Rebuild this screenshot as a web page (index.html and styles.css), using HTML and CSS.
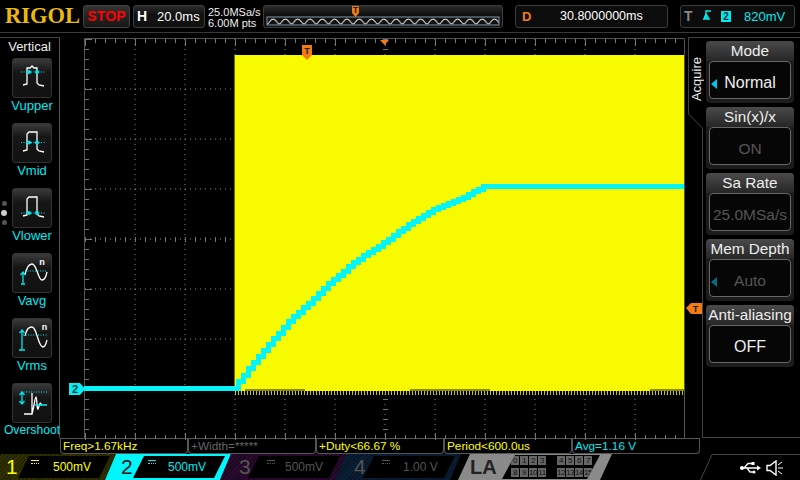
FILE: index.html
```html
<!DOCTYPE html>
<html lang="en">

<head>
    <meta charset="UTF-8">
    <meta name="viewport" content="width=device-width, initial-scale=1.0">
    <title>Scope</title>
    <link rel="stylesheet" href="styles.css">
</head>

<body>

    <div class="top">
        <div class="logo">RIGOL</div>
        <div class="stop">STOP</div>
        <div class="box hbox"><b>H</b><span>20.0ms</span></div>
        <div class="rate"><p>25.0MSa/s</p><p>6.00M pts</p></div>
        <div class="box overview">
            <svg width="240" height="22" viewBox="0 0 240 22">
                <defs>
                    <pattern id="sine" x="4" y="12" width="12.3" height="10" patternUnits="userSpaceOnUse">
                        <path d="M0 7C2 7 3 2 6.15 2S10 7 12.3 7" fill="none" stroke="#eee" stroke-width="1"></path>
                    </pattern>
                </defs>
                <rect x="4" y="12" width="232" height="8" fill="url(#sine)" stroke="#8496a8"></rect>
                <path d="M89 1h7v7l-3.500 4l-3.500 -4z" fill="#f47a14"></path>
                <text x="92.500" y="8" class="tmark">T</text>
            </svg>
        </div>
        <div class="box dbox"><b>D</b><span>30.8000000ms</span></div>
        <div class="box tbox">
            <b>T</b>
            <svg width="12" height="16" viewBox="0 0 12 16"><path d="M1 11H4V3H9M2 11H7L4 6z" fill="none" stroke="#00e8f0" stroke-width="1.500"></path></svg>
            <i>2</i>
            <span>820mV</span>
        </div>
    </div>

    <div class="main">
        <div class="vert">
            <div class="vtitle">Vertical</div>
            <div class="pager"><i></i><i class="on"></i><i></i></div>

            <div class="vitem">
                <div class="vbtn">
                    <svg width="40" height="40" viewBox="0 0 40 40">
                        <path class="wave" d="M11 27L15 26V10H18L20 8L22 10H25V25L27 27L32 28"></path>
                        <path class="dots" d="M9 14H34"></path>
                        <circle class="dot" cx="17" cy="14" r="2"></circle>
                        <circle class="dot" cx="25" cy="14" r="2"></circle>
                    </svg>
                </div>
                <p>Vupper</p>
            </div>
            <div class="vitem">
                <div class="vbtn">
                    <svg width="40" height="40" viewBox="0 0 40 40">
                        <path class="wave" d="M11 28L15 27V11L17 9H25V26L27 28L32 29"></path>
                        <path class="dots" d="M9 19.500H34"></path>
                        <circle class="dot" cx="17" cy="19.500" r="2"></circle>
                        <circle class="dot" cx="25" cy="19.500" r="2"></circle>
                    </svg>
                </div>
                <p>Vmid</p>
            </div>
            <div class="vitem">
                <div class="vbtn">
                    <svg width="40" height="40" viewBox="0 0 40 40">
                        <path class="wave" d="M11 28L15 27V11L17 9H25V26L27 28L32 29"></path>
                        <path class="dots" d="M9 25H34"></path>
                        <circle class="dot" cx="17" cy="25" r="2"></circle>
                        <circle class="dot" cx="25" cy="25" r="2"></circle>
                    </svg>
                </div>
                <p>Vlower</p>
            </div>
            <div class="vitem">
                <div class="vbtn">
                    <svg width="40" height="40" viewBox="0 0 40 40">
                        <path class="wave" d="M13 22C15 12 18 11 20 11C25 11 26 27 30 27C33 27 34 24 35 19"></path>
                        <path class="dots" d="M13 18H35"></path>
                        <path class="arrow" d="M9 31H13M11 31V20M8.500 22L11 19L13.500 22"></path>
                        <text x="30" y="12" class="nmark">n</text>
                    </svg>
                </div>
                <p>Vavg</p>
            </div>
            <div class="vitem">
                <div class="vbtn">
                    <svg width="40" height="40" viewBox="0 0 40 40">
                        <path class="wave" d="M13 18C15 10 17 9 20 9C25 9 26 29 31 29C33 29 34 26 35 22"></path>
                        <path class="dots" d="M11 17H35"></path>
                        <path class="arrow" d="M7 32H13M10 32V13M7.500 15L10 12L12.500 15"></path>
                        <text x="32.500" y="12" class="nmark">n</text>
                    </svg>
                </div>
                <p>Vrms</p>
            </div>
            <div class="vitem">
                <div class="vbtn">
                    <svg width="40" height="40" viewBox="0 0 40 40">
                        <path class="wave" d="M12 31H20V10M20 31C22 24 23 14 24 14S25 28 26 26S28 18 29 21L30 22"></path>
                        <path class="dots" d="M9 9H35"></path>
                        <path class="arrow" d="M10 9V21M7.500 12L10 9L12.500 12M7.500 18L10 21L12.500 18M23 22H35"></path>
                    </svg>
                </div>
                <p class="small">Overshoot</p>
            </div>
        </div>

        <svg class="scope" width="628" height="406" viewBox="60 32 628 406">
            <path class="frame" d="M84.500 438V37.500H684.500V438"></path>
            <!-- grid -->
            <path class="grid" d="M135 38V438M185 38V438M235 38V438M285 38V438M335 38V438M385 38V438M435 38V438M485 38V438M535 38V438M585 38V438M635 38V438"></path>
            <path class="grid" d="M85 88H685M85 138H685M85 188H685M85 238H685M85 288H685M85 338H685M85 388H685"></path>
            <!-- ticks on the frame -->
            <line class="tick" x1="85" y1="40" x2="685" y2="40" stroke-width="4" stroke-dasharray="1 9"></line>
            <line class="tick" x1="85" y1="41" x2="685" y2="41" stroke-width="7" stroke-dasharray="1 49"></line>
            <line class="tick" x1="85" y1="436" x2="685" y2="436" stroke-width="4" stroke-dasharray="1 9"></line>
            <line class="tick" x1="85" y1="435" x2="685" y2="435" stroke-width="7" stroke-dasharray="1 49"></line>
            <line class="tick" x1="87" y1="38" x2="87" y2="438" stroke-width="4" stroke-dasharray="1 9"></line>
            <line class="tick" x1="88" y1="38" x2="88" y2="438" stroke-width="7" stroke-dasharray="1 49"></line>
            <line class="tick" x1="85" y1="238" x2="685" y2="238" stroke-width="5" stroke-dasharray="1 9"></line>
            <line class="tick" x1="385" y1="38" x2="385" y2="438" stroke-width="5" stroke-dasharray="1 9"></line>

            <!-- channel 1 -->
            <rect x="235" y="54" width="449" height="336" fill="#f8fb00"></rect>
            <path d="M234.500 54V390" stroke="#6f7000" fill="none"></path>
            <path d="M245 389H305M410 389H490M650 389H684" stroke="#8b8c00" stroke-width="2" fill="none"></path>
            <line x1="235" y1="392" x2="684" y2="392" stroke="#c8ca00" stroke-width="4" stroke-dasharray="1 2"></line>

            <!-- channel 2 -->
            <path class="trace" d="M84 387H238V380H243V374H248V367H253V361H258V355H263V349H268V343H273V337H278V332H283V326H288V320H293V315H298V311H303V306H308V302H313V297H318V292H323V287H328V282H333V278H338V274H343V270H348V265H353V261H358V258H363V254H368V251H373V248H378V245H383V241H388V238H393V234H398V230H403V227H408V223H413V220H418V217H423V214H428V211H433V208H438V206H443V204H448V202H453V200H458V198H463V196H468V193H473V190H478V188H483V185H684"></path>

            <!-- markers -->
            <path d="M380 39H389L384.500 44z" fill="#f47a14"></path>
            <path d="M302 44H312V54L307 59L302 54z" fill="#f47a14"></path>
            <text x="307" y="53" class="tmark">T</text>
            <path d="M69 382H80L85 388L80 394H69z" fill="#00f0f8"></path>
            <text x="75" y="392" class="cmark">2</text>
            <path d="M686 307L691 302H702V313H691z" fill="#f47a14"></path>
            <text x="695.500" y="311" class="tmark">T</text>
        </svg>

        <div class="menu">
            <svg class="outline" width="112" height="406" viewBox="0 0 112 406">
                <path d="M112 5.500H0.500V82L14.500 96V405.500H112" fill="none" stroke="#444"></path>
            </svg>
            <div class="tab"><span>Acquire</span></div>
            <div class="items">
                <div class="item">
                    <div class="ititle">Mode</div>
                    <div class="ival"><i></i>Normal</div>
                </div>
                <div class="item">
                    <div class="ititle">Sin(x)/x</div>
                    <div class="ival off">ON</div>
                </div>
                <div class="item">
                    <div class="ititle">Sa Rate</div>
                    <div class="ival off">25.0MSa/s</div>
                </div>
                <div class="item">
                    <div class="ititle">Mem Depth</div>
                    <div class="ival off"><i class="dim"></i>Auto</div>
                </div>
                <div class="item">
                    <div class="ititle">Anti-aliasing</div>
                    <div class="ival">OFF</div>
                </div>
            </div>
        </div>
    </div>

    <div class="meas">
        <div class="m yel">Freq&gt;1.67kHz</div>
        <div class="m gry">+Width=*****</div>
        <div class="m yel">+Duty&lt;66.67 %</div>
        <div class="m yel">Period&lt;600.0us</div>
        <div class="m cya">Avg=1.16 V</div>
    </div>

    <div class="bottom">
        <div class="ch ch1"><b>1</b><div class="val"><u></u>500mV</div></div>
        <div class="ch ch2"><b>2</b><div class="val"><u></u>500mV</div></div>
        <div class="ch ch3"><b>3</b><div class="val"><u></u>500mV</div></div>
        <div class="ch ch4"><b>4</b><div class="val"><u></u>1.00 V</div></div>
        <div class="la">
            <b>LA</b>
            <div class="bits">
                <div class="row"><span>0</span><span>1</span><span>2</span><span>3</span><em></em><span>4</span><span>5</span><span>6</span><span>7</span></div>
                <div class="row"><span>8</span><span>9</span><span>10</span><span>11</span><em></em><span>12</span><span>13</span><span>14</span><span>15</span></div>
            </div>
        </div>
        <svg class="slash" width="13" height="26" viewBox="0 0 13 26"><path d="M0.500 26L12 0.500H13" fill="none" stroke="#444"></path></svg>
        <div class="status">
            <svg width="21" height="12" viewBox="0 0 21 12">
                <path d="M0 6H18M4 6L8 1.500H12M7 6L10 10H13" fill="none" stroke="#fff" stroke-width="1.300"></path>
                <path d="M17 3.500L21 6L17 8.500z" fill="#fff"></path>
                <circle cx="2" cy="6" r="2" fill="#fff"></circle>
                <rect x="11.500" y="0" width="3" height="3" fill="#fff"></rect>
                <circle cx="14" cy="10" r="1.500" fill="#fff"></circle>
            </svg>
            <svg width="18" height="16" viewBox="0 0 18 16">
                <path d="M1 5.500H4L10 1V15L4 10.500H1z" fill="none" stroke="#fff" stroke-width="1.400"></path>
                <path d="M12 5L16 2M12 8H17M12 11L16 14" fill="none" stroke="#fff"></path>
            </svg>
        </div>
    </div>

</body>

</html>
```

FILE: styles.css
```css
* {
    margin: 0;
    padding: 0;
    box-sizing: border-box;
}

html,
body {
    width: 800px;
    height: 480px;
    overflow: hidden;
    background-color: #000;
    color: #fff;
    font-family: "Liberation Sans", Arial, sans-serif;
}

/* top bar */
.top {
    height: 33px;
    display: flex;
    align-items: center;
    border-bottom: 1px solid #3a3a3a;
    position: relative;
}

.logo {
    width: 83px;
    padding-left: 5px;
    font-family: "Liberation Serif", serif;
    font-weight: 700;
    font-size: 22.500px;
    color: #ecb90f;
}

.stop {
    width: 47px;
    height: 23px;
    margin-right: 3px;
    line-height: 21px;
    text-align: center;
    font-size: 14px;
    font-weight: 700;
    letter-spacing: .2px;
    color: #ff0000;
    background-image: linear-gradient(#333, #161616);
    border: 1px solid #444;
    border-radius: 3px;
}

.box {
    height: 23px;
    display: flex;
    align-items: center;
    background-image: linear-gradient(#2c2c2c, #111 40%);
    border: 1px solid #3c3c3c;
    border-radius: 3px;
}

.hbox {
    width: 72px;
    padding-left: 3px;
    font-size: 13px;
}

.hbox b {
    width: 20px;
    font-size: 14px;
}

.rate {
    width: 55px;
    margin-left: 3px;
    padding-top: 3px;
    font-size: 11px;
    line-height: 11px;
    color: #eee;
}

.overview {
    width: 240px;
}

.overview svg {
    margin-left: -1px;
    flex: none;
}

.tmark {
    font-size: 9px;
    font-weight: 700;
    text-anchor: middle;
    fill: #222;
}

.cmark {
    font-size: 11px;
    font-weight: 700;
    text-anchor: middle;
    fill: #033;
}

.dbox {
    width: 153px;
    margin-left: 12px;
    font-size: 12.500px;
    background-image: none;
    background-color: #0c0c0c;
}

.dbox b {
    width: 44px;
    padding-left: 6px;
    font-size: 13px;
    color: #f47a14;
}

.tbox {
    width: 115px;
    margin-left: 12px;
    padding-left: 3px;
    font-size: 13px;
    background-image: none;
    background-color: #0c0c0c;
}

.tbox b {
    width: 18px;
    font-size: 14px;
    color: #888;
}

.tbox i {
    width: 10px;
    height: 11px;
    margin-left: 7px;
    line-height: 11px;
    text-align: center;
    font-style: normal;
    font-weight: 700;
    font-size: 10px;
    color: #033;
    background-color: #00e8f0;
}

.tbox span {
    margin-left: 13px;
    color: #00e8f0;
}

/* middle */
.main {
    height: 405px;
    display: flex;
}

.vert {
    position: relative;
    width: 60px;
    margin-top: 4px;
    border-top: 1px solid #444;
    border-right: 1px solid #555;
}

.vtitle {
    height: 20px;
    line-height: 17px;
    text-align: center;
    font-size: 13px;
    color: #eee;
}

.pager {
    position: absolute;
    left: 1px;
    top: 163px;
    display: flex;
    flex-direction: column;
    align-items: center;
    gap: 4px;
}

.pager i {
    width: 5px;
    height: 5px;
    border-radius: 50%;
    background-color: #555;
}

.pager i.on {
    width: 6px;
    height: 6px;
    background-color: #ccc;
}

.vitem {
    height: 65px;
    margin-left: 12px;
    width: 48px;
}

.vitem p {
    width: 40px;
    display: flex;
    justify-content: center;
    white-space: nowrap;
    height: 25px;
    line-height: 15px;
    font-size: 13px;
    color: #00e8f0;
}

.vitem p.small {
    font-size: 12.200px;
}

.vbtn {
    width: 40px;
    height: 40px;
    background-image: linear-gradient(#3a3a3a, #161616 35%, #111);
    border: 1px solid #333;
    border-radius: 3px;
    overflow: hidden;
}

.vbtn svg {
    display: block;
    margin: -1px;
}

.wave {
    fill: none;
    stroke: #fff;
    stroke-width: 1.300;
}

.dots {
    fill: none;
    stroke: #00e8f0;
    stroke-width: 1;
    stroke-dasharray: 1 1.500;
}

.dot {
    fill: #00e8f0;
}

.arrow {
    fill: none;
    stroke: #00e8f0;
    stroke-width: 1.300;
}

.nmark {
    font-size: 9px;
    font-weight: 700;
    text-anchor: middle;
    fill: #fff;
}

.scope {
    display: block;
    overflow: visible;
    flex: none;
}

.frame {
    fill: none;
    stroke: #555;
}

.grid {
    fill: none;
    stroke: #8a8a8a;
    stroke-dasharray: 1 4;
}

.tick {
    stroke: #777;
    shape-rendering: crispEdges;
}

.trace {
    fill: none;
    stroke: #00f6fa;
    stroke-width: 5;
    shape-rendering: crispEdges;
}

/* right hand menu */
.menu {
    position: relative;
    width: 112px;
    display: flex;
}

.outline {
    position: absolute;
    left: 0;
    top: -1px;
}

.tab {
    width: 18px;
    padding-top: 24px;
    padding-left: 2px;
}

.tab span {
    display: block;
    writing-mode: vertical-rl;
    transform: rotate(180deg);
    font-size: 13px;
    line-height: 13px;
    color: #eee;
}

.items {
    position: relative;
    width: 88px;
    padding-top: 8px;
    display: flex;
    flex-direction: column;
    gap: 4px;
}

.item {
    height: 62px;
    background-color: #1c1c1c;
    border-radius: 4px;
}

.ititle {
    height: 20px;
    line-height: 20px;
    text-align: center;
    white-space: nowrap;
    font-size: 15.300px;
    color: #eee;
    background-image: linear-gradient(#4a4a4a, #262626);
    border-radius: 4px 4px 0 0;
}

.ival {
    position: relative;
    height: 38px;
    margin: 0 3px;
    line-height: 42px;
    text-align: center;
    font-size: 16px;
    color: #eee;
    background-color: #060606;
    border: 1px solid #666;
    border-radius: 4px;
    overflow: hidden;
    white-space: nowrap;
}

.ival.off {
    font-size: 15.500px;
    color: #555;
}

.ival i {
    position: absolute;
    left: 1px;
    top: 17px;
    border-top: 5px solid transparent;
    border-bottom: 5px solid transparent;
    border-right: 6px solid #00c8e8;
}

.ival i.dim {
    border-right-color: #0a6a80;
}

/* measurements */
.meas {
    height: 15px;
    margin-left: 60px;
    width: 640px;
    display: flex;
    border-top: 1px solid #555;
}

.m {
    flex: 1;
    line-height: 15px;
    padding-left: 2px;
    font-size: 11.800px;
    white-space: nowrap;
    border-left: 1px solid #555;
    border-right: 1px solid #555;
    border-bottom: 1px solid #555;
    border-radius: 0 0 4px 4px;
    height: 15px;
}

.yel {
    color: #ffff00;
}

.gry {
    color: #666;
}

.cya {
    color: #00e8f0;
}

/* bottom bar */
.bottom {
    height: 27px;
    padding-top: 1px;
    display: flex;
}

.ch {
    position: relative;
    flex: none;
    width: 126px;
    height: 26px;
    margin-right: -11px;
    display: flex;
    clip-path: polygon(11px 0, 100% 0, calc(100% - 11px) 100%, 0 100%);
}

.ch b {
    flex: none;
    width: 47px;
    padding-left: 16px;
    line-height: 26px;
    font-weight: 400;
    font-size: 21px;
}

.val {
    position: relative;
    flex: none;
    width: 92px;
    height: 22px;
    margin-top: 2px;
    margin-left: -19px;
    padding-left: 35px;
    line-height: 22px;
    font-size: 12px;
    background-color: #000;
    clip-path: polygon(11px 0, 100% 0, calc(100% - 11px) 100%, 0 100%);
}

.val u {
    position: absolute;
    left: 13px;
    top: 4px;
    width: 8px;
    height: 4px;
    border-top: 1px solid currentColor;
    border-bottom: 1px dotted currentColor;
}

.ch1 {
    margin-left: -10px;
    color: #ffff00;
    background-image: repeating-linear-gradient(135deg, #343400 0 1px, #262600 1px 3px);
}

.ch2 {
    color: #00e8f0;
    background-color: #00f6fa;
}

.ch2 b {
    color: #111;
}

.ch2 u {
    left: 15px;
}

.ch3 {
    color: #555;
    background-image: repeating-linear-gradient(135deg, #2c0c30 0 1px, #200824 1px 3px);
}

.ch3 b,
.ch4 b {
    padding-left: 19px;
}

.ch3 .val {
    padding-left: 37px;
}

.ch3 u,
.ch4 u {
    left: 19px;
}

.ch4 {
    color: #555;
    background-image: repeating-linear-gradient(135deg, #0c2038 0 1px, #08182a 1px 3px);
}

.ch4 .val {
    padding-left: 40px;
}

.la {
    flex: none;
    width: 154px;
    height: 26px;
    margin-left: 8px;
    display: flex;
    color: #222;
    background-color: #8a8a8a;
    clip-path: polygon(12px 0, 100% 0, calc(100% - 12px) 100%, 0 100%);
}

.la b {
    flex: none;
    width: 44px;
    padding-left: 12px;
    line-height: 26px;
    font-size: 20px;
}

.bits {
    width: 98px;
    height: 24px;
    margin-top: 1px;
    padding-left: 9px;
    background-color: #000;
    clip-path: polygon(13px 0, 100% 0, calc(100% - 13px) 100%, 0 100%);
}

.row {
    height: 11px;
    margin-top: 1px;
    display: flex;
}

.row span {
    width: 8px;
    height: 9px;
    margin-right: 1px;
    line-height: 9px;
    text-align: center;
    font-size: 8px;
    letter-spacing: -.5px;
    color: #111;
    background-color: #666;
}

.row em {
    width: 10px;
}

.slash {
    flex: none;
    margin-left: 88px;
}

.status {
    flex: 1;
    padding-left: 27px;
    display: flex;
    align-items: center;
    gap: 5px;
    border-top: 1px solid #444;
}
```
